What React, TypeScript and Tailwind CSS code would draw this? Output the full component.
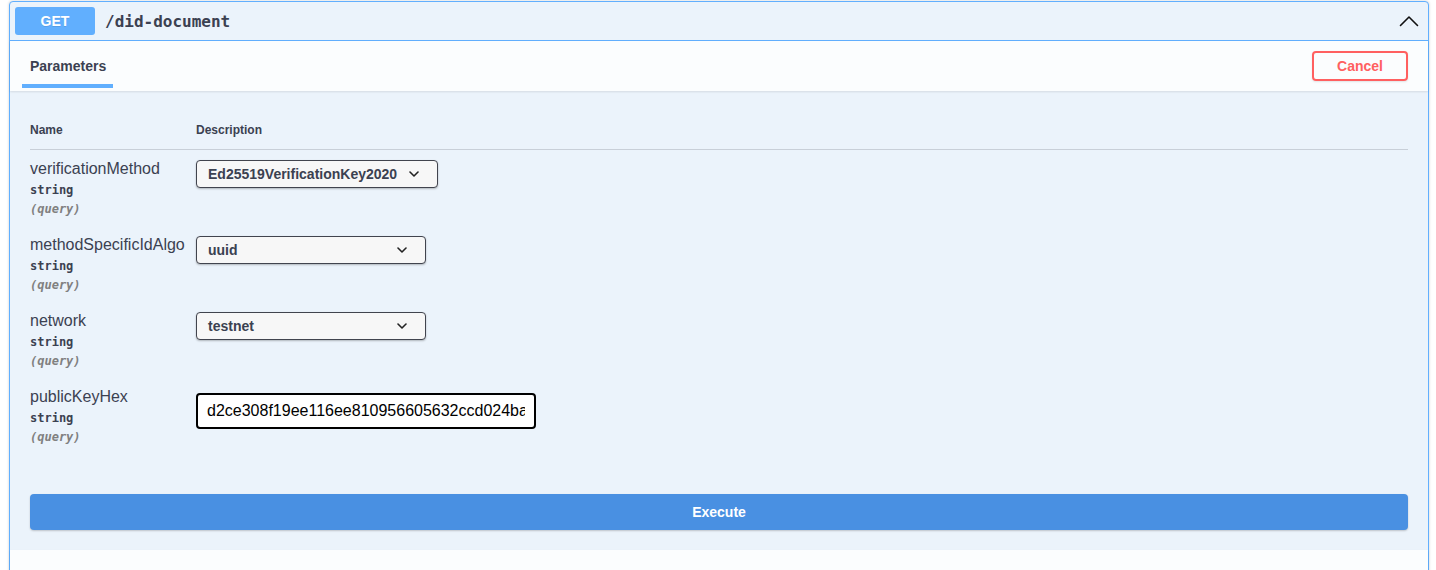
import React from 'react';

const params = [
  { name: 'verificationMethod', kind: 'select', value: 'Ed25519VerificationKey2020', width: 'w-[242px]' },
  { name: 'methodSpecificIdAlgo', kind: 'select', value: 'uuid', width: 'w-[230px]' },
  { name: 'network', kind: 'select', value: 'testnet', width: 'w-[230px]' },
  { name: 'publicKeyHex', kind: 'input', value: 'd2ce308f19ee116ee810956605632ccd024ba1d3bd3fe3afbf4e3ddd5a9b7f08' },
];

function SmallChevron() {
  return (
    <svg width="10" height="6" viewBox="0 0 10 6" className="shrink-0">
      <path d="M1 1l4 4 4-4" fill="none" stroke="#222" strokeWidth="1.6" strokeLinecap="round" strokeLinejoin="round" />
    </svg>
  );
}

export default function App() {
  const sans = { fontFamily: '"Liberation Sans", Arial, sans-serif' };
  const mono = { fontFamily: '"DejaVu Sans Mono", monospace' };

  return (
    <div className="min-h-screen bg-white pt-[1px]" style={sans}>
      <div className="ml-[9px] w-[1420px] border border-[#61affe] rounded-[4px] bg-[#ebf3fb] shadow-[0_0_3px_rgba(0,0,0,0.19)] text-[#3b4151]">
        {/* summary */}
        <div className="flex items-center p-[5px] border-b border-[#61affe]">
          <span className="w-[80px] h-[28px] flex items-center justify-center rounded-[3px] bg-[#61affe] text-white text-[14px] font-bold [text-shadow:0_1px_0_rgba(0,0,0,0.1)]">
            GET
          </span>
          <span className="px-[10px] pt-[2px] text-[16px] font-bold text-[#3b4151]" style={mono}>
            /did-document
          </span>
          <div className="flex-1" />
          <svg width="20" height="12" viewBox="0 0 20 12" className="mr-[4px]">
            <path d="M1.5 10.5L10 2l8.5 8.5" fill="none" stroke="#111" strokeWidth="1.6" strokeLinecap="round" strokeLinejoin="round" />
          </svg>
        </div>

        {/* section header */}
        <div className="h-[50px] flex items-center justify-between px-[20px] bg-white/80 shadow-[0_1px_2px_rgba(0,0,0,0.1)]">
          <div className="relative h-full flex items-center">
            <h4 className="text-[14px] font-bold text-[#3b4151]">Parameters</h4>
            <span className="absolute left-[-8px] right-[-7px] bottom-[3px] h-[4px] bg-[#61affe]" />
          </div>
          <button className="w-[96px] h-[30px] border-2 border-[#ff6060] rounded-[4px] text-[#ff6060] text-[14px] font-bold bg-transparent shadow-[0_1px_2px_rgba(0,0,0,0.1)]">
            Cancel
          </button>
        </div>

        {/* table */}
        <div className="p-[20px]">
          <div className="flex border-b border-[#3b4151]/20 py-[12px] text-[12px] font-bold leading-[14px]">
            <div className="w-[166px]">Name</div>
            <div>Description</div>
          </div>
          {params.map((p) => (
            <div key={p.name} className="flex py-[10px]">
              <div className="w-[166px] flex flex-col">
                <div className="text-[16px] leading-[18px] text-[#3b4151]">{p.name}</div>
                <div className="py-[5px] text-[12px] leading-[14px] font-bold text-[#3b4151]" style={mono}>
                  string
                </div>
                <div className="text-[12px] leading-[14px] italic font-bold text-[#808080]" style={mono}>
                  (query)
                </div>
              </div>
              <div>
                {p.kind === 'select' ? (
                  <div
                    className={`${p.width} h-[28px] flex items-center justify-between pl-[11px] pr-[18px] border border-[#41444e] rounded-[4px] bg-[#f7f7f7] shadow-[0_1px_2px_rgba(0,0,0,0.25)] text-[14px] font-bold text-[#3b4151]`}
                  >
                    <span>{p.value}</span>
                    <SmallChevron />
                  </div>
                ) : (
                  <input
                    type="text"
                    readOnly
                    value={p.value}
                    className="mt-[5px] block w-[340px] h-[36px] px-[9px] border-2 border-black rounded-[4px] bg-white text-[16px] text-black outline-none"
                    style={sans}
                  />
                )}
              </div>
            </div>
          ))}
        </div>

        {/* execute */}
        <div className="px-[20px] pt-[20px] pb-[20px]">
          <button className="w-full h-[36px] rounded-[4px] bg-[#4990e2] text-white text-[14px] font-bold shadow-[0_1px_2px_rgba(0,0,0,0.2)]">
            Execute
          </button>
        </div>

        {/* responses header (below the fold) */}
        <div className="h-[50px] bg-white/80 shadow-[0_1px_2px_rgba(0,0,0,0.1)]" />
        <div className="h-[40px]" />
      </div>
    </div>
  );
}
